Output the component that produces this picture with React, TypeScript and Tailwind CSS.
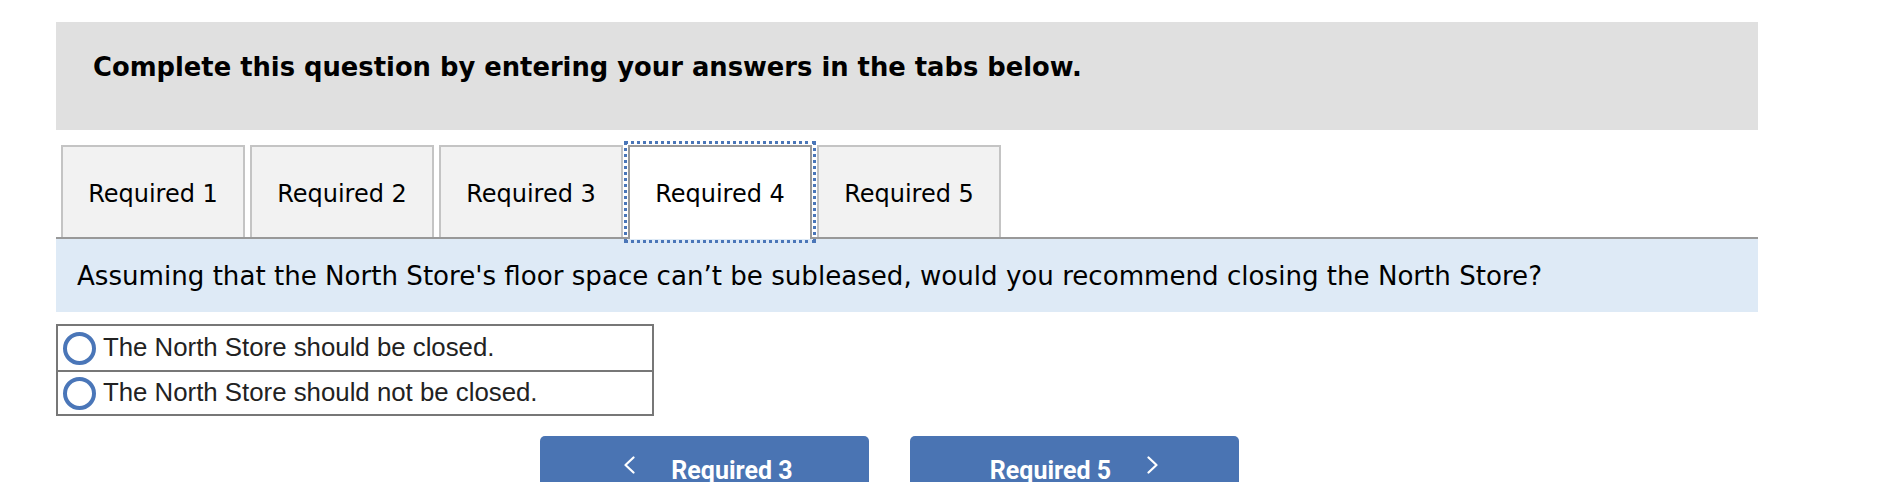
import React from 'react';

const tabs = ['Required 1', 'Required 2', 'Required 3', 'Required 4', 'Required 5'];
const activeTab = 3;

const options = ['The North Store should be closed.', 'The North Store should not be closed.'];

function Chevron({ dir }: { dir: 'left' | 'right' }) {
  return (
    <svg width="12" height="18" viewBox="0 0 12 18" fill="none" className="shrink-0">
      <polyline
        points={dir === 'left' ? '10.5,1.5 2.5,9 10.5,16.5' : '1.5,1.5 9.5,9 1.5,16.5'}
        stroke="white"
        strokeWidth="2.2"
        strokeLinecap="round"
        strokeLinejoin="round"
      />
    </svg>
  );
}

export default function App() {
  return (
    <div className="w-[1880px] h-[482px] overflow-hidden bg-white pt-[22px] pl-[56px]">
      <div className="w-[1702px]">
        {/* instructions */}
        <div className="h-[108px] bg-[#e0e0e0] pl-[37px] pt-[29px]">
          <p className="font-['DejaVu_Sans',sans-serif] font-bold text-[25.8px] leading-[32px] text-black">
            Complete this question by entering your answers in the tabs below.
          </p>
        </div>

        {/* tabs */}
        <div className="mt-[15px] flex items-start gap-[5px] pl-[5px] border-b-2 border-[#999]">
          {tabs.map((t, i) =>
            i === activeTab ? (
              <div
                key={t}
                className="relative z-10 w-[184px] h-[94px] -mb-[2px] pb-[2px] bg-white border-2 border-b-0 border-[#999] outline-[3px] outline-dotted outline-[#4a76b8] outline-offset-[1px] flex items-center justify-center font-['DejaVu_Sans',sans-serif] text-[24px] text-black"
              >
                <span className="mt-[4px]">{t}</span>
              </div>
            ) : (
              <div
                key={t}
                className="w-[184px] h-[92px] bg-[#f2f2f2] border-2 border-b-0 border-[#c4c4c4] flex items-center justify-center font-['DejaVu_Sans',sans-serif] text-[24px] text-black"
              >
                <span className="mt-[4px]">{t}</span>
              </div>
            )
          )}
        </div>

        {/* question */}
        <div className="h-[73px] bg-[#deeaf6] flex items-center pl-[21px]">
          <p className="mt-[3px] font-['DejaVu_Sans',sans-serif] text-[26.1px] text-black">
            Assuming that the North Store's floor space can’t be subleased, would you recommend closing the North Store?
          </p>
        </div>

        {/* answers */}
        <div className="mt-[12px] w-[598px] border-2 border-[#777]">
          {options.map((o, i) => (
            <div
              key={o}
              className={`h-[44px] flex items-center gap-[7px] pl-[5px] ${i > 0 ? 'border-t-2 border-[#777]' : ''}`}
            >
              <span className="w-[33px] h-[33px] rounded-full border-[4px] border-[#4a76b8] bg-white shrink-0" />
              <span className="font-['Liberation_Sans',Arial,sans-serif] text-[25.8px] text-[#222] leading-none">
                {o}
              </span>
            </div>
          ))}
        </div>

        {/* navigation */}
        <div className="mt-[20px] ml-[484px] flex gap-[41px]">
          <button className="w-[329px] h-[60px] rounded-[5px] bg-[#4a74b3] flex items-start justify-center gap-[36px] pt-[20px] pl-[7px]">
            <Chevron dir="left" />
            <span className="mt-[2px] font-['Roboto',sans-serif] font-bold text-[25px] leading-none text-white">
              Required 3
            </span>
          </button>
          <button className="w-[329px] h-[60px] rounded-[5px] bg-[#4a74b3] flex items-start justify-center gap-[36px] pt-[20px]">
            <span className="mt-[2px] font-['Roboto',sans-serif] font-bold text-[25px] leading-none text-white">
              Required 5
            </span>
            <Chevron dir="right" />
          </button>
        </div>
      </div>
    </div>
  );
}
